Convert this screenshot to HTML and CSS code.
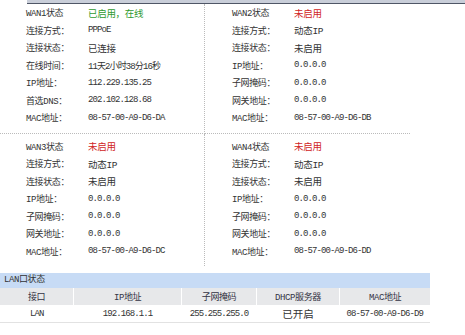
FILE: index.html
```html
<!DOCTYPE html>
<html>
  <head>
    <title>运行状态</title>
<link rel="stylesheet" href="styles.css">
  </head>
  <body>
    <div class="topbar"></div>
    <div class="wan-grid">
      <div class="wan left top">
        <div class="row"><span class="lbl">WAN1状态</span><span class="val cn on">已启用，在线</span></div>
        <div class="row"><span class="lbl">连接方式：</span><span class="val">PPPoE</span></div>
        <div class="row"><span class="lbl">连接状态：</span><span class="val cn">已连接</span></div>
        <div class="row"><span class="lbl">在线时间：</span><span class="val">11天2小时38分16秒</span></div>
        <div class="row"><span class="lbl">IP地址：</span><span class="val">112.229.135.25</span></div>
        <div class="row"><span class="lbl">首选DNS：</span><span class="val">202.102.128.68</span></div>
        <div class="row"><span class="lbl">MAC地址：</span><span class="val">08-57-00-A9-D6-DA</span></div>
      </div>
      <div class="wan top">
        <div class="row"><span class="lbl">WAN2状态</span><span class="val cn off">未启用</span></div>
        <div class="row"><span class="lbl">连接方式：</span><span class="val cn">动态IP</span></div>
        <div class="row"><span class="lbl">连接状态：</span><span class="val cn">未启用</span></div>
        <div class="row"><span class="lbl">IP地址：</span><span class="val">0.0.0.0</span></div>
        <div class="row"><span class="lbl">子网掩码：</span><span class="val">0.0.0.0</span></div>
        <div class="row"><span class="lbl">网关地址：</span><span class="val">0.0.0.0</span></div>
        <div class="row"><span class="lbl">MAC地址：</span><span class="val">08-57-00-A9-D6-DB</span></div>
      </div>
      <div class="wan left">
        <div class="row"><span class="lbl">WAN3状态</span><span class="val cn off">未启用</span></div>
        <div class="row"><span class="lbl">连接方式：</span><span class="val cn">动态IP</span></div>
        <div class="row"><span class="lbl">连接状态：</span><span class="val cn">未启用</span></div>
        <div class="row"><span class="lbl">IP地址：</span><span class="val">0.0.0.0</span></div>
        <div class="row"><span class="lbl">子网掩码：</span><span class="val">0.0.0.0</span></div>
        <div class="row"><span class="lbl">网关地址：</span><span class="val">0.0.0.0</span></div>
        <div class="row"><span class="lbl">MAC地址：</span><span class="val">08-57-00-A9-D6-DC</span></div>
      </div>
      <div class="wan">
        <div class="row"><span class="lbl">WAN4状态</span><span class="val cn off">未启用</span></div>
        <div class="row"><span class="lbl">连接方式：</span><span class="val cn">动态IP</span></div>
        <div class="row"><span class="lbl">连接状态：</span><span class="val cn">未启用</span></div>
        <div class="row"><span class="lbl">IP地址：</span><span class="val">0.0.0.0</span></div>
        <div class="row"><span class="lbl">子网掩码：</span><span class="val">0.0.0.0</span></div>
        <div class="row"><span class="lbl">网关地址：</span><span class="val">0.0.0.0</span></div>
        <div class="row"><span class="lbl">MAC地址：</span><span class="val">08-57-00-A9-D6-DD</span></div>
      </div>
    </div>

    <div class="lan">
      <div class="lan-title">LAN口状态</div>
      <table class="lan-table">
        <tr>
          <th class="c1">接口</th>
          <th class="c2">IP地址</th>
          <th class="c3">子网掩码</th>
          <th class="c4">DHCP服务器</th>
          <th class="c5">MAC地址</th>
        </tr>
        <tr>
          <td>LAN</td>
          <td>192.168.1.1</td>
          <td>255.255.255.0</td>
          <td class="cn">已开启</td>
          <td>08-57-00-A9-D6-D9</td>
        </tr>
      </table>
    </div>
  </body>
</html>
```

FILE: styles.css
```css
body {
  margin: 0;
  background: #fff;
  color: #333;
  font-family: "Liberation Mono", "Noto Sans CJK SC", monospace;
  font-size: 9px;
  letter-spacing: -0.4px;
}

.topbar {
  margin-left: 27px;
  height: 3px;
  background: #c9ced9;
  border-bottom: 1px solid #4f5666;
}

.wan-grid {
  display: grid;
  grid-template-columns: 205px 205px;
}

.wan {
  padding: 4px 0 6px 27px;
}

.wan.top {
  padding-top: 0;
  border-bottom: 1px dotted #bbb;
}

.wan.left {
  padding-left: 26px;
  border-right: 1px dotted #bbb;
}

.row {
  display: flex;
  align-items: center;
  height: 17.5px;
}

.lbl {
  width: 62px;
  flex: none;
}

.val {
  letter-spacing: -0.9px;
}

.val.cn {
  font-size: 9.5px;
  letter-spacing: -0.3px;
}

.val.on {
  color: #2f9a2f;
}

.val.off {
  color: #d02424;
}

.lan {
  margin-top: 7px;
  width: 430px;
}

.lan-title {
  height: 15px;
  line-height: 15px;
  padding-left: 4px;
  background: #c7dbf5;
  color: #333;
}

.lan-table {
  width: 100%;
  border-collapse: collapse;
  font-size: 9px;
}

.lan-table th {
  height: 17px;
  padding: 0;
  background: #e7e8ea;
  border-left: 1px solid #fff;
  font-weight: normal;
  color: #334;
}

.lan-table th:first-child {
  border-left: none;
}

.lan-table td {
  height: 17px;
  padding: 0;
  text-align: center;
  border-bottom: 1px solid #e2e2e2;
  letter-spacing: -0.9px;
}

.lan-table td.cn {
  font-size: 10.5px;
  letter-spacing: 0;
}

.c1 { width: 73px; }
.c2 { width: 107px; }
.c3 { width: 74px; }
.c4 { width: 82px; }
.c5 { width: auto; }
```
